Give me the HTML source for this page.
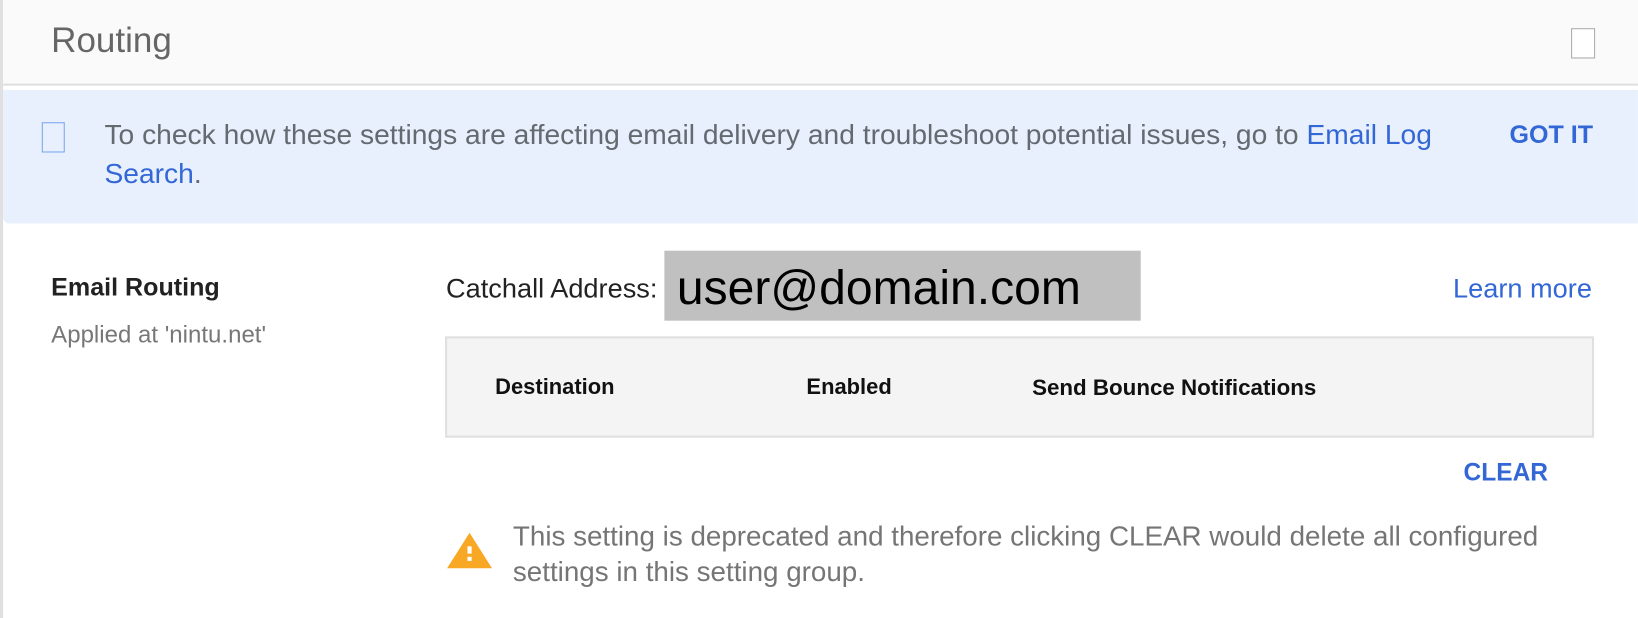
<!DOCTYPE html>
<html><head><meta charset="utf-8"><style>
*{margin:0;padding:0;box-sizing:border-box}
body{width:1638px;height:618px;overflow:hidden;background:#fff;font-family:"Liberation Sans",Arial,sans-serif;position:relative}
#w{position:absolute;left:0;top:0;width:1568px;height:592px;transform:scale(1.0446);transform-origin:0 0}
.a{position:absolute;white-space:nowrap}
</style></head><body><div id="w">
<div class="a" style="left:0;top:0;width:3px;height:592px;background:#e0e0e0"></div>
<div class="a" style="left:3px;top:0;width:1565px;height:82px;background:#fafafa;border-bottom:2px solid #e0e0e0"></div>
<div class="a" style="left:49px;top:21px;font-size:33.5px;color:#666">Routing</div>
<div class="a" style="left:1504px;top:27px;width:23px;height:29px;border:1.5px solid #aaa;background:#fff"></div>
<div class="a" style="left:3px;top:86px;width:1565px;height:128px;background:#e8f0fd;border-radius:0 0 0 6px"></div>
<div class="a" style="left:40px;top:117px;width:22px;height:29px;border:1px solid #7aa5f0"></div>
<div class="a" style="left:100px;top:114px;font-size:27px;color:#646a70">To check how these settings are affecting email delivery and troubleshoot potential issues, go to <span style="color:#3367d6">Email Log</span></div>
<div class="a" style="left:100px;top:151px;font-size:27px;color:#646a70"><span style="color:#3367d6">Search</span>.</div>
<div class="a" style="left:1445px;top:116px;font-size:24px;font-weight:bold;color:#3367d6">GOT IT</div>
<div class="a" style="left:49px;top:262px;font-size:24px;color:#222;font-weight:bold">Email Routing</div>
<div class="a" style="left:49px;top:307px;font-size:23px;color:#777">Applied at 'nintu.net'</div>
<div class="a" style="left:427px;top:261px;font-size:26px;color:#222">Catchall Address:</div>
<div class="a" style="left:636px;top:240px;width:456px;height:67px;background:#c0c0c0"></div>
<div class="a" style="left:648px;top:248px;font-size:46px;color:#000">user@domain.com</div>
<div class="a" style="left:1391px;top:261px;font-size:26px;color:#3367d6">Learn more</div>
<div class="a" style="left:426px;top:322px;width:1100px;height:97px;background:#f4f4f4;border:2px solid #e0e0e0"></div>
<div class="a" style="left:474px;top:359px;font-size:21px;font-weight:bold;color:#111">Destination</div>
<div class="a" style="left:772px;top:359px;font-size:21px;font-weight:bold;color:#111">Enabled</div>
<div class="a" style="left:988px;top:359px;font-size:21.4px;font-weight:bold;color:#111">Send Bounce Notifications</div>
<div class="a" style="left:1401px;top:439px;font-size:23.5px;font-weight:bold;color:#3367d6">CLEAR</div>
<svg class="a" style="left:427px;top:509px" width="45" height="36" viewBox="0 0 45 36"><polygon points="22.5,1 44,35 1,35" fill="#f9a825"/><rect x="20.5" y="14" width="4" height="7" fill="#fff"/><rect x="20.5" y="24" width="4" height="4" fill="#fff"/></svg>
<div class="a" style="left:491px;top:496px;font-size:26.6px;color:#757575;line-height:34px">This setting is deprecated and therefore clicking CLEAR would delete all configured<br>settings in this setting group.</div>
</div></body></html>
